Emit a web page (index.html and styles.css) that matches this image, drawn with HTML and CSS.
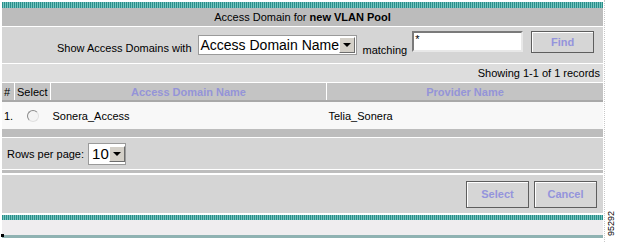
FILE: index.html
```html
<!DOCTYPE html>
<html lang="en">
<head>
  <meta charset="UTF-8" />
  <title>Access Domain for new VLAN Pool</title>
  <link rel="stylesheet" href="styles.css">
</head>
<body>
  <div class="page">
    <div class="panel">
      <div class="stripe"></div>
      <div class="title">Access Domain for <b>new VLAN Pool</b></div>

      <div class="search">
        <span class="label">Show Access Domains with</span>
        <div class="combo wide">
          <span class="combo-value">Access Domain Name</span>
          <span class="combo-arrow"></span>
        </div>
        <span class="label matching">matching</span>
        <div class="textbox">*</div>
        <div class="btn find">Find</div>
      </div>

      <div class="showing">Showing 1-1 of 1 records</div>

      <table class="grid">
        <thead>
          <tr>
            <th class="num">#</th>
            <th class="sel">Select</th>
            <th class="col name">Access Domain Name</th>
            <th class="col">Provider Name</th>
          </tr>
        </thead>
        <tbody>
          <tr>
            <td class="num">1.</td>
            <td class="sel"><span class="radio"></span></td>
            <td>Sonera_Access</td>
            <td>Telia_Sonera</td>
          </tr>
        </tbody>
      </table>
      <div class="bar"></div>

      <div class="rows">
        <span class="label">Rows per page:</span>
        <div class="combo small">
          <span class="combo-value">10</span>
          <span class="combo-arrow"></span>
        </div>
      </div>
      <div class="bar thin"></div>

      <div class="actions">
        <div class="btn">Select</div>
        <div class="btn">Cancel</div>
      </div>

      <div class="stripe low"></div>
      <div class="foot"></div>
      <div class="foot-line"><span class="dot"></span></div>
    </div>

    <div class="side">
      <span class="figure">95292</span>
    </div>
  </div>
</body>
</html>
```

FILE: styles.css
```css
/* Access domain picker, old admin console look */
body {
  margin: 0;
  background: #fff;
  font-family: "Liberation Sans", Arial, sans-serif;
  font-size: 11px;
  color: #000;
}

.page {
  display: flex;
  height: 242px;
}

.panel {
  width: 601px;
  margin-left: 2px;
  padding-top: 2px;
  display: flex;
  flex-direction: column;
}

.stripe {
  height: 6px;
  background: repeating-linear-gradient(90deg, #2a8f8a 0 1px, #76c3bf 1px 2px);
}

.title {
  height: 18px;
  line-height: 18px;
  background: #bcbcbc;
  text-align: center;
  margin-bottom: 1px;
}

.search {
  height: 36px;
  background: #d5d5d5;
  display: flex;
  align-items: center;
  padding-left: 55px;
  margin-bottom: 1px;
}

.label {
  white-space: nowrap;
}

.search .label {
  margin-top: 5px;
}

.search .matching {
  margin: 9px 5px 0 6px;
}

.combo {
  display: flex;
  align-items: center;
  height: 20px;
  background: #fff;
  border: 1px solid #9a9a9a;
  box-sizing: border-box;
  padding: 1px;
}

.combo.wide {
  width: 159px;
  margin-left: 6px;
}

.combo.small {
  width: 38px;
  height: 22px;
  margin-left: 4px;
}

.combo-value {
  flex: 1;
  font-size: 14px;
  line-height: 16px;
  padding-left: 1px;
  white-space: nowrap;
}

.combo.small .combo-value {
  padding-left: 2px;
  font-size: 15px;
}

.combo-arrow {
  width: 16px;
  height: 16px;
  flex: none;
  box-sizing: border-box;
  background: #d4d0c8;
  border: 1px solid;
  border-color: #fff #6d6d6d #6d6d6d #fff;
  position: relative;
}

.combo-arrow::after {
  content: "";
  position: absolute;
  left: 3px;
  top: 5px;
  border-left: 4px solid transparent;
  border-right: 4px solid transparent;
  border-top: 4px solid #000;
}

.textbox {
  width: 111px;
  height: 21px;
  box-sizing: border-box;
  background: #fff;
  border: 2px solid;
  border-color: #7a7a7a #e8e8e8 #e8e8e8 #7a7a7a;
  font-size: 11px;
  line-height: 12px;
  padding-left: 1px;
  margin-top: -7px;
}

.btn {
  width: 63px;
  height: 27px;
  box-sizing: border-box;
  background: #d6d6d6;
  border: 1px solid #5e5e5e;
  box-shadow: inset 1px 1px 0 #fff;
  color: #9494dc;
  font-weight: bold;
  font-size: 11px;
  display: flex;
  align-items: center;
  justify-content: center;
}

.btn.find {
  height: 22px;
  margin-left: 8px;
  margin-top: -6px;
}

.showing {
  height: 18px;
  line-height: 18px;
  background: #dddddd;
  text-align: right;
  padding-right: 3px;
  margin-bottom: 1px;
}

.grid {
  width: 100%;
  border-collapse: collapse;
  table-layout: fixed;
}

.grid th {
  height: 17px;
  background: #c4c4c4;
  border-left: 1px solid #fff;
  border-bottom: 2px solid #a9a9a9;
  font-weight: normal;
  padding: 0 2px;
  text-align: left;
}

.grid th:first-child {
  border-left: 0;
}

.grid th.col {
  color: #9494d8;
  font-weight: bold;
  text-align: center;
}

.grid .num {
  width: 8px;
}

.grid .sel {
  width: 31px;
}

.grid .name {
  width: 271px;
}

.grid td {
  height: 27px;
  background: #f8f8f8;
  padding: 0 2px;
}

.grid td.sel {
  text-align: center;
}

.radio {
  display: inline-block;
  width: 10px;
  height: 10px;
  border-radius: 50%;
  border: 1px solid;
  border-color: #8a8a8a #e0e0e0 #e0e0e0 #8a8a8a;
  background: #f4f4f4;
  vertical-align: middle;
}

.bar {
  height: 8px;
  background: #bdbdbd;
  margin-bottom: 1px;
}

.bar.thin {
  height: 3px;
  margin-top: 1px;
  margin-bottom: 2px;
}

.rows {
  height: 30px;
  background: #d5d5d5;
  display: flex;
  align-items: center;
  padding-left: 5px;
  padding-top: 1px;
}

.actions {
  height: 38px;
  background: #d5d5d5;
  display: flex;
  justify-content: flex-end;
  align-items: center;
  gap: 5px;
  padding-right: 6px;
  margin-bottom: 2px;
}

.stripe.low {
  height: 5px;
}

.foot {
  height: 15px;
  background: #efedef;
}

.foot-line {
  height: 3px;
  background: #8fb2b2;
  position: relative;
}

.dot {
  position: absolute;
  left: -1px;
  top: -1px;
  width: 3px;
  height: 3px;
  background: #000;
}

.side {
  width: 12px;
  border-left: 1px dotted #c8c8c8;
  margin-left: 1px;
  display: flex;
  align-items: flex-end;
  justify-content: center;
  padding-bottom: 6px;
}

.figure {
  writing-mode: vertical-rl;
  transform: rotate(180deg);
  font-size: 9px;
  line-height: 10px;
}
```
